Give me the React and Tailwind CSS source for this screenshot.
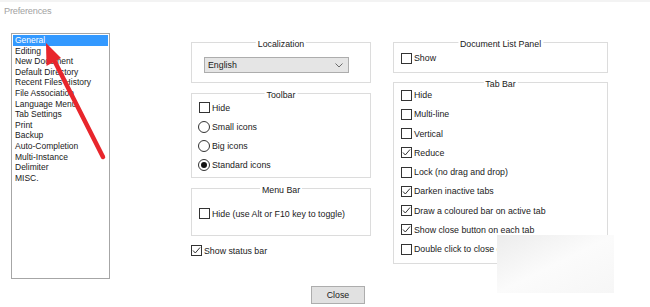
import React from 'react';

const pages = [
  'General',
  'Editing',
  'New Document',
  'Default Directory',
  'Recent Files History',
  'File Association',
  'Language Menu',
  'Tab Settings',
  'Print',
  'Backup',
  'Auto-Completion',
  'Multi-Instance',
  'Delimiter',
  'MISC.',
];

const tabBar = [
  ['Hide', false],
  ['Multi-line', false],
  ['Vertical', false],
  ['Reduce', true],
  ['Lock (no drag and drop)', false],
  ['Darken inactive tabs', true],
  ['Draw a coloured bar on active tab', true],
  ['Show close button on each tab', true],
  ['Double click to close document', false],
];

function Check({ checked }) {
  return (
    <span className="w-[11px] h-[11px] flex-none border border-[#333] bg-white flex items-center justify-center">
      {checked && (
        <svg width="9" height="9" viewBox="0 0 9 9">
          <path d="M1 4.5 L3.3 7 L8 1.5" fill="none" stroke="#333" strokeWidth="1" />
        </svg>
      )}
    </span>
  );
}

function Radio({ checked }) {
  return (
    <span className="w-[12px] h-[12px] -ml-[1px] flex-none rounded-full border border-[#333] bg-white flex items-center justify-center">
      {checked && <span className="w-[6px] h-[6px] rounded-full bg-[#111]" />}
    </span>
  );
}

function Row({ children, label, className = 'h-[19px]' }) {
  return (
    <div className={`flex items-center gap-[2px] ${className}`}>
      {children}
      <span className="whitespace-nowrap">{label}</span>
    </div>
  );
}

function Group({ title, className, children }) {
  return (
    <div className={`relative border border-[#dcdcdc] ${className}`}>
      <span className="absolute -top-[4px] left-1/2 -translate-x-1/2 bg-white px-[2px] leading-[10px] whitespace-nowrap">
        {title}
      </span>
      {children}
    </div>
  );
}

export default function App() {
  return (
    <div className="relative w-[650px] h-[307px] overflow-hidden bg-white text-[8.8px] leading-[10px] text-[#1a1a1a] font-['Liberation_Sans',Arial,sans-serif]">
      <div className="h-[2px] bg-[#f3f3f3]" />
      <div className="h-[31px] pl-[4px] pt-[4px] text-[9.2px] leading-[11px] text-[#a3a3a3] tracking-[-0.2px]">
        Preferences
      </div>

      <div className="flex items-start">
        {/* page list */}
        <div className="ml-[11px] w-[99px] h-[246px] border border-[#a6a6a6] p-[1px] text-[8.5px]">
          {pages.map((p, i) => (
            <div
              key={p}
              className={`h-[10.6px] leading-[10.6px] pl-[2px] whitespace-nowrap ${
                i === 0 ? 'bg-[#3399ff] text-white' : ''
              }`}
            >
              {p}
            </div>
          ))}
        </div>

        {/* middle column */}
        <div className="ml-[81px] mt-[9px] w-[180px]">
          <Group title="Localization" className="h-[41px] pt-[14px] pl-[12px]">
            <div className="w-[145px] h-[16px] border border-[#adadad] bg-[#e5e5e5] flex items-center justify-between pl-[3px] pr-[5px]">
              <span>English</span>
              <svg width="8" height="5" viewBox="0 0 8 5">
                <path d="M0.5 0.5 L4 4 L7.5 0.5" fill="none" stroke="#6b6b6b" strokeWidth="1" />
              </svg>
            </div>
          </Group>

          <Group title="Toolbar" className="mt-[10px] h-[85px] pt-[4px] pl-[7px]">
            <Row label="Hide">
              <Check />
            </Row>
            <Row label="Small icons">
              <Radio />
            </Row>
            <Row label="Big icons">
              <Radio />
            </Row>
            <Row label="Standard icons">
              <Radio checked />
            </Row>
          </Group>

          <Group title="Menu Bar" className="mt-[10px] h-[48px] pt-[15px] pl-[7px]">
            <Row label="Hide (use Alt or F10 key to toggle)">
              <Check />
            </Row>
          </Group>

          <div className="mt-[5px]">
            <Row label="Show status bar">
              <Check checked />
            </Row>
          </div>
        </div>

        {/* right column */}
        <div className="ml-[22px] mt-[9px] w-[215px]">
          <Group title="Document List Panel" className="h-[31px] pt-[5.5px] pl-[7px]">
            <Row label="Show">
              <Check />
            </Row>
          </Group>

          <Group title="Tab Bar" className="mt-[9px] h-[182px] pt-[2.5px] pl-[7px]">
            {tabBar.map(([label, on]) => (
              <Row key={label} label={label} className="h-[19.25px]">
                <Check checked={on} />
              </Row>
            ))}
          </Group>
        </div>
      </div>

      <button className="ml-[311px] mt-[7px] w-[54px] h-[18px] border border-[#adadad] bg-[#e1e1e1] text-[8.8px] leading-[16px] text-[#1a1a1a]">
        Close
      </button>

      {/* red arrow drawn over the list */}
      <svg className="absolute left-0 top-0 pointer-events-none" width="120" height="170" viewBox="0 0 120 170">
        <line x1="53" y1="58" x2="103" y2="157" stroke="#e8262c" strokeWidth="4.5" strokeLinecap="round" />
        <polygon points="46,43 46.5,66 61,58" fill="#e8262c" />
      </svg>

      {/* blurred watermark patch */}
      <div className="absolute left-[497px] top-[235px] w-[117px] h-[58px] bg-gradient-to-br from-[#ececec] via-[#fbfbfb] to-[#f6f6f6]" />
    </div>
  );
}
